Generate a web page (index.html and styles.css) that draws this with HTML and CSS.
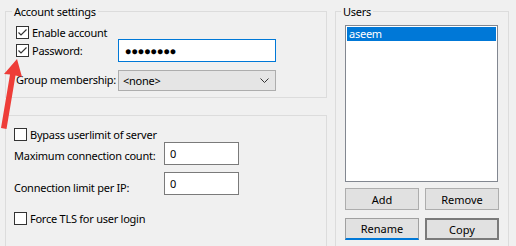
FILE: index.html
```html
<!DOCTYPE html>
<html lang="en">
<head>
  <meta charset="UTF-8" />
  <title>Users</title>
  <link rel="stylesheet" href="styles.css">
</head>
<body>
<div class="window">
  <div class="left">
    <div class="group account">
      <div class="group-title">Account settings</div>
      <div class="account-grid">
        <label class="check wide">
          <span class="box"><svg width="11" height="11" viewBox="0 0 11 11"><polyline points="1.5,5.5 4,8 9.5,2.5" /></svg></span>Enable account
        </label>
        <label class="check pass">
          <span class="box"><svg width="11" height="11" viewBox="0 0 11 11"><polyline points="1.5,5.5 4,8 9.5,2.5" /></svg></span>Password:
        </label>
        <div class="textbox focused"><span class="dots">●●●●●●●●</span></div>
        <span class="lbl">Group membership:</span>
        <div class="combo">
          <span>&lt;none&gt;</span>
          <svg width="9" height="6" viewBox="0 0 9 6"><polyline points="0.5,0.5 4.5,4.5 8.5,0.5" /></svg>
        </div>
      </div>
    </div>

    <div class="group limits">
      <label class="check"><span class="box"></span>Bypass userlimit of server</label>
      <div class="limit-row">
        <span class="lbl">Maximum connection count:</span>
        <div class="textbox num">0</div>
      </div>
      <div class="limit-row ip">
        <span class="lbl">Connection limit per IP:</span>
        <div class="textbox num">0</div>
      </div>
      <label class="check tls"><span class="box"></span>Force TLS for user login</label>
    </div>
  </div>

  <div class="group users">
    <div class="group-title">Users</div>
    <div class="listbox">
      <div class="item selected">aseem</div>
    </div>
    <div class="buttons">
      <button>Add</button>
      <button>Remove</button>
      <button class="focus">Rename</button>
      <button class="default">Copy</button>
    </div>
  </div>
</div>

<svg class="arrow" width="26" height="132" viewBox="0 0 26 132">
  <polygon points="17,59 22,77 15.5,75.5 6.5,129 1,128 10,74.5 4,74" />
</svg>
</body>
</html>
```

FILE: styles.css
```css
html, body {
  margin: 0;
  height: 246px;
  overflow: hidden;
}
body {
  background: #f0f0f0;
  font-family: "Noto Sans", "Open Sans", sans-serif;
  font-size: 11px;
  letter-spacing: -0.25px;
  color: #000;
  position: relative;
}
.window {
  display: flex;
  gap: 8px;
  padding: 11px 0 0 5px;
}
.left {
  width: 322px;
}
.group {
  border: 1px solid #dcdcdc;
  box-sizing: border-box;
}
.group-title {
  display: table;
  margin: -8px 0 0 -4px;
  padding: 0 2px;
  line-height: 15px;
  background: #f0f0f0;
}
.account {
  height: 87px;
  padding: 0 0 6px 10px;
}
.account-grid {
  display: grid;
  grid-template-columns: 102px 158px;
  grid-template-rows: 13px 23px 29px;
  margin-top: 7px;
}
.wide {
  grid-column: 1 / 3;
}
.check {
  display: flex;
  align-items: center;
  gap: 3px;
  height: 13px;
  line-height: 13px;
  white-space: nowrap;
}
.check.pass {
  align-self: center;
}
.box {
  width: 13px;
  height: 13px;
  box-sizing: border-box;
  border: 1px solid #333;
  background: #fff;
  display: flex;
  align-items: center;
  justify-content: center;
  flex: none;
}
.box svg polyline {
  fill: none;
  stroke: #333;
  stroke-width: 1.2;
}
.lbl {
  white-space: nowrap;
}
.textbox {
  box-sizing: border-box;
  height: 23px;
  border: 1px solid #7a7a7a;
  background: #fff;
}
.textbox.focused {
  border-color: #0078d7;
  display: flex;
  align-items: center;
  padding-left: 6px;
}
.dots {
  font-family: Lato, sans-serif;
  font-size: 10px;
  letter-spacing: 0.4px;
}
.account-grid .lbl {
  align-self: end;
  padding-bottom: 4px;
}
.combo {
  align-self: end;
  height: 21px;
  box-sizing: border-box;
  border: 1px solid #adadad;
  background: #e5e5e5;
  display: flex;
  align-items: center;
  justify-content: space-between;
  padding: 0 6px 0 4px;
}
.combo svg polyline {
  fill: none;
  stroke: #333;
  stroke-width: 1;
}
.limits {
  margin-top: 17px;
  height: 160px;
  padding: 12px 0 0 8px;
}
.limit-row {
  display: grid;
  grid-template-columns: 150px 75px;
  height: 23px;
  margin-top: 1px;
}
.limit-row.ip {
  margin-top: 7px;
}
.limit-row .lbl {
  align-self: center;
  padding-top: 3px;
}
.limit-row.ip .lbl {
  padding-top: 7px;
}
.textbox.num {
  padding: 3px 0 0 5px;
  line-height: 15px;
}
.tls {
  margin-top: 17px;
}
.users {
  width: 174px;
  height: 250px;
  padding: 0 0 0 9px;
}
.listbox {
  margin-top: 6px;
  width: 153px;
  height: 157px;
  box-sizing: border-box;
  border: 1px solid #828790;
  background: #fff;
  padding: 1px;
}
.item {
  height: 14px;
  line-height: 14px;
  padding-left: 2px;
}
.item.selected {
  background: #0078d7;
  color: #fff;
}
.buttons {
  display: grid;
  grid-template-columns: 74px 74px;
  grid-auto-rows: 22px;
  column-gap: 6px;
  row-gap: 8px;
  margin-top: 6px;
}
.buttons button {
  font: inherit;
  color: #000;
  background: #e1e1e1;
  border: 1px solid #adadad;
  padding: 0;
  margin: 0;
}
.buttons button.focus {
  border-color: #a0a0a0;
  border-bottom: 2px solid #0078d7;
}
.buttons button.default {
  border: 2px solid #7a7a7a;
}
.arrow {
  position: absolute;
  left: 0;
  top: 0;
}
.arrow polygon {
  fill: #ee3d38;
}
```
